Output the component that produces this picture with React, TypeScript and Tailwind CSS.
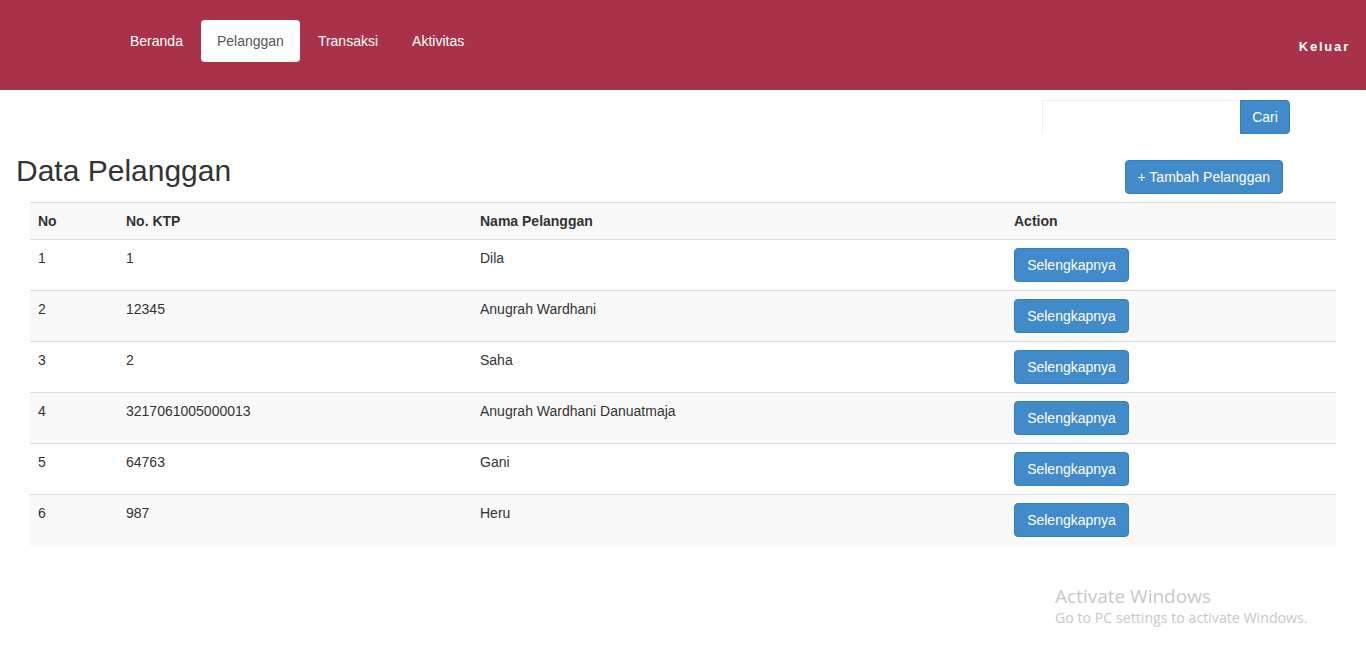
type Pelanggan = {
  no: number;
  ktp: string;
  nama: string;
};

const rows: Pelanggan[] = [
  { no: 1, ktp: "1", nama: "Dila" },
  { no: 2, ktp: "12345", nama: "Anugrah Wardhani" },
  { no: 3, ktp: "2", nama: "Saha" },
  { no: 4, ktp: "3217061005000013", nama: "Anugrah Wardhani Danuatmaja" },
  { no: 5, ktp: "64763", nama: "Gani" },
  { no: 6, ktp: "987", nama: "Heru" },
];

function Navbar() {
  return (
    <div className="flex h-[90px] items-start justify-between bg-[#a7324a] pt-5">
      <ul className="ml-[115px] flex">
        <li className="px-[15px] py-[11px] text-white">Beranda</li>
        <li className="ml-[3px] rounded bg-white px-4 py-[11px] text-[#555]">Pelanggan</li>
        <li className="ml-[2px] px-[16px] py-[11px] text-white">Transaksi</li>
        <li className="ml-[2px] px-[16px] py-[11px] text-white">Aktivitas</li>
      </ul>
      <div className="mr-4 pt-[17px] text-[13px] font-bold tracking-[1.8px] text-white">Keluar</div>
    </div>
  );
}

function App() {
  return (
    <div className="relative min-h-[662px] bg-white text-sm leading-5 text-[#333]" style={{ fontFamily: '"Liberation Sans", Arial, sans-serif' }}>
      <Navbar />
      <div className="mr-[76px] mt-[10px] flex justify-end">
        <input className="h-[34px] w-[198px] border-t border-l border-[#eeeeee] px-3 outline-none" />
        <button className="h-[34px] w-[50px] rounded-r border border-[#357ebd] bg-[#428bca] text-white">Cari</button>
      </div>
      <div className="flex items-start justify-between">
        <h2 className="ml-4 mt-[20px] text-[30px] leading-[33px] font-normal">Data Pelanggan</h2>
        <button className="mr-[83px] mt-[26px] h-[34px] rounded border border-[#357ebd] bg-[#428bca] px-3 text-white">
          + Tambah Pelanggan
        </button>
      </div>
      <div className="mx-[30px] mt-2">
        <table className="w-full border-collapse">
          <thead>
            <tr className="bg-[#f9f9f9]">
              <th className="w-[88px] border-t border-b border-[#dddddd] p-2 text-left font-bold">No</th>
              <th className="w-[354px] border-t border-b border-[#dddddd] p-2 text-left font-bold">No. KTP</th>
              <th className="w-[534px] border-t border-b border-[#dddddd] p-2 text-left font-bold">Nama Pelanggan</th>
              <th className="border-t border-b border-[#dddddd] p-2 text-left font-bold">Action</th>
            </tr>
          </thead>
          <tbody>
            {rows.map((r, i) => (
              <tr key={r.no} className={i % 2 === 1 ? "bg-[#f9f9f9]" : "bg-white"}>
                <td className={`h-[51px] p-2 align-top ${i > 0 ? "border-t border-[#dddddd]" : ""}`}>{r.no}</td>
                <td className={`p-2 align-top ${i > 0 ? "border-t border-[#dddddd]" : ""}`}>{r.ktp}</td>
                <td className={`p-2 align-top ${i > 0 ? "border-t border-[#dddddd]" : ""}`}>{r.nama}</td>
                <td className={`p-2 align-top ${i > 0 ? "border-t border-[#dddddd]" : ""}`}>
                  <button className="h-[34px] w-[115px] rounded border border-[#357ebd] bg-[#428bca] text-white">
                    Selengkapnya
                  </button>
                </td>
              </tr>
            ))}
          </tbody>
        </table>
      </div>
      <div className="absolute left-[1055px] top-[584px] text-[#c8c8c8]" style={{ fontFamily: '"Open Sans", sans-serif' }}>
        <div className="text-[19px] leading-6">Activate Windows</div>
        <div className="text-[14.2px] leading-5">Go to PC settings to activate Windows.</div>
      </div>
    </div>
  );
}

export default App;
